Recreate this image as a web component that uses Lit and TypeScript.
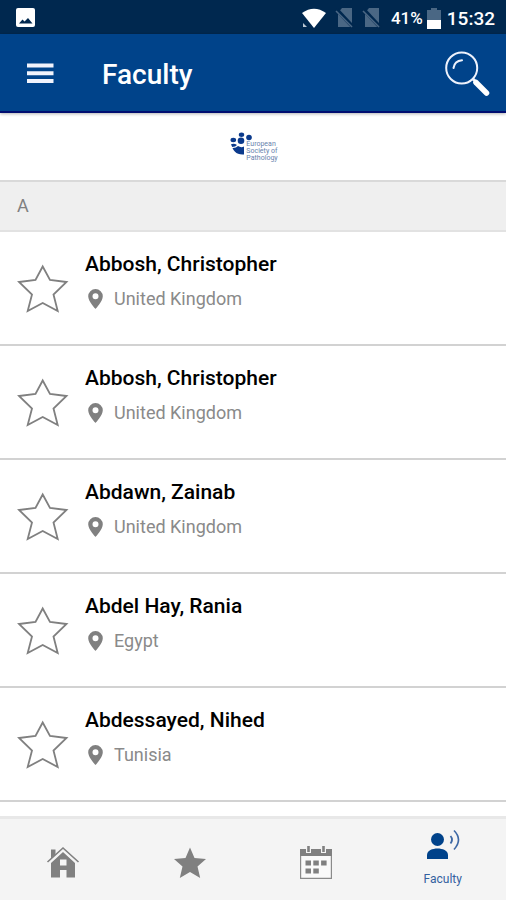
import { LitElement, html, css, svg } from "lit";
import { customElement, state } from "lit/decorators.js";
import { classMap } from "lit/directives/class-map.js";

interface Person {
  name: string;
  country: string;
}

const PEOPLE: Person[] = [
  { name: "Abbosh, Christopher", country: "United Kingdom" },
  { name: "Abbosh, Christopher", country: "United Kingdom" },
  { name: "Abdawn, Zainab", country: "United Kingdom" },
  { name: "Abdel Hay, Rania", country: "Egypt" },
  { name: "Abdessayed, Nihed", country: "Tunisia" },
];

const simIcon = html`<svg width="20" height="22" viewBox="0 0 20 22" aria-hidden="true">
  <path d="M7 1H17V20H3V6Z" fill="#4a6784" />
  <path d="M1 2L19 21" stroke="#00284f" stroke-width="4" />
  <path d="M1 4L17 20" stroke="#4a6784" stroke-width="1.6" />
</svg>`;

@customElement("status-bar")
class StatusBar extends LitElement {
  static styles = css`
    :host {
      display: flex;
      align-items: center;
      justify-content: space-between;
      height: 34px;
      flex: none;
      padding: 2px 11px 0 16px;
      box-sizing: border-box;
      background: #00284f;
      color: #fff;
      font-weight: 500;
    }
    .right {
      display: flex;
      align-items: center;
    }
    .sims {
      display: flex;
      gap: 7px;
      margin: 0 9px 0 8px;
    }
    .percent {
      font-size: 17px;
      margin-right: 4px;
    }
    .time {
      font-size: 19px;
      margin-left: 6px;
    }
    svg {
      display: block;
    }
  `;

  render() {
    return html`
      <svg width="20" height="20" viewBox="0 0 20 20" aria-hidden="true">
        <rect width="19" height="19" rx="2" fill="#fff" />
        <path d="M3 15.500L6.500 11.500L8.500 13.500L12 10L16.500 15.500Z" fill="#00284f" />
      </svg>
      <div class="right">
        <svg width="26" height="20" viewBox="0 0 26 20" aria-hidden="true">
          <path d="M1 5Q13-3.500 25 5L13 20Z" fill="#fff" />
          <path d="M2 15L6 19H2Z" fill="#b9c6d2" />
        </svg>
        <div class="sims">${simIcon}${simIcon}</div>
        <span class="percent">41%</span>
        <svg width="14" height="21" viewBox="0 0 14 21" aria-hidden="true">
          <path d="M4 0H10V2H14V13H0V2H4Z" fill="#4a6784" />
          <path d="M0 12H14V21H0Z" fill="#fff" />
        </svg>
        <span class="time">15:32</span>
      </div>
    `;
  }
}

@customElement("person-row")
class PersonRow extends LitElement {
  static properties = { person: { attribute: false }, starred: { state: true } };
  declare person: Person;
  declare starred: boolean;

  constructor() {
    super();
    this.starred = false;
  }

  static styles = css`
    :host {
      display: flex;
      align-items: center;
      gap: 16px;
      min-height: 112px;
      padding: 0 17px;
      border-bottom: 2px solid #d2d2d2;
    }
    button {
      border: 0;
      padding: 2px 0 0;
      background: none;
      cursor: pointer;
    }
    svg {
      display: block;
      flex: none;
    }
    .star {
      fill: none;
      stroke: #808080;
      stroke-width: 1.8;
    }
    .star.on {
      fill: #808080;
    }
    .text {
      padding-bottom: 16px;
    }
    h2 {
      margin: 0 0 9px;
      font-size: 21px;
      line-height: 28px;
      font-weight: 500;
      color: #000;
    }
    p {
      display: flex;
      align-items: center;
      gap: 11px;
      margin: 0;
      padding-left: 3px;
      font-size: 18px;
      line-height: 24px;
      color: #8a8a8a;
    }
  `;

  render() {
    return html`
      <button
        aria-label="Favourite ${this.person.name}"
        aria-pressed=${this.starred ? "true" : "false"}
        @click=${() => (this.starred = !this.starred)}
      >
        <svg width="52" height="50" viewBox="0 0 52 50">
          <path
            class=${classMap({ star: true, on: this.starred })}
            d="M25.700 2.500L33 16L49.500 18L36.500 30.500L40.700 47L25.700 39L10.700 47L15 30.500L2 18L18.500 16Z"
          />
        </svg>
      </button>
      <div class="text">
        <h2>${this.person.name}</h2>
        <p>
          <svg width="15" height="20" viewBox="0 0 15 20" aria-hidden="true">
            <path
              d="M7.500 0A7.300 7.300 0 0 0 .2 7.300C.2 12.500 7.500 20 7.500 20S14.800 12.500 14.800 7.300A7.300 7.300 0 0 0 7.500 0ZM7.500 4.300A3 3 0 1 1 7.500 10.300A3 3 0 1 1 7.500 4.300Z"
              fill="#808080"
            />
          </svg>
          ${this.person.country}
        </p>
      </div>
    `;
  }
}

const TABS = [
  {
    id: "home",
    label: "Home",
    icon: svg`<path d="M5 3.500H9.500V9L5 13Z" fill="#808080"/>
      <path d="M17 6L29 17V31.500H20.500V24H14V31.500H5V17ZM14 13.500V19.500H20.500V13.500Z" fill="#808080" fill-rule="evenodd"/>
      <path d="M1.500 17.500L17 3.500L32.500 17.500" fill="none" stroke="#f4f4f4" stroke-width="3"/>
      <path d="M1.500 16L17 2L32.500 16" fill="none" stroke="#808080" stroke-width="1.600"/>`,
  },
  {
    id: "favourites",
    label: "Favourites",
    icon: svg`<path d="M17 1.500L21.500 12L33 13L24.500 20.500L27.200 32L17 26L6.800 32L9.500 20.500L1 13L12.500 12Z" fill="#808080"/>`,
  },
  {
    id: "calendar",
    label: "Calendar",
    icon: svg`<path d="M1.600 3.500H32.400V32.400H1.600Z" fill="#fafafa" stroke="#8a8a8a" stroke-width="1.200"/>
      <path d="M1 3H33V10H1Z" fill="#808080"/>
      <path d="M7 0H12V7H7ZM22 0H27V7H22Z" fill="#f4f4f4"/>
      <path d="M8.200 0H10.800V6H8.200ZM23.200 0H25.800V6H23.200Z" fill="#808080"/>
      <path d="M6.500 14.500H12V19.500H6.500ZM14.300 14.500H19.800V19.500H14.300ZM22.100 14.500H27.600V19.500H22.100ZM6.500 22.500H12V27.500H6.500ZM14.300 22.500H19.800V27.500H14.300Z" fill="#808080"/>`,
  },
  {
    id: "faculty",
    label: "Faculty",
    icon: svg`<circle cx="11.500" cy="10.500" r="6.500" fill="#00428a"/>
      <path d="M1 30V26C1 21.500 6.500 19.500 11.500 19.500S22 21.500 22 26V30Z" fill="#00428a"/>
      <path d="M24.500 7Q27.500 10.500 24.500 14.500" fill="none" stroke="#3d68a5" stroke-width="1.800"/>
      <path d="M28 1.500Q37 10.500 28 20.500" fill="none" stroke="#3d68a5" stroke-width="1.600"/>`,
  },
];

@customElement("app-root")
class AppRoot extends LitElement {
  @state() private active = "faculty";

  static styles = css`
    :host {
      display: flex;
      flex-direction: column;
      height: 100vh;
      background: #fff;
      font-family: Roboto, "Liberation Sans", sans-serif;
    }
    button {
      border: 0;
      padding: 0;
      background: none;
      font: inherit;
      color: inherit;
      cursor: pointer;
    }
    svg {
      display: block;
    }
    header {
      display: flex;
      align-items: center;
      flex: none;
      height: 77px;
      padding: 0 15px 0 26px;
      background: #00438a;
      border-bottom: 2px solid #000d70;
      box-shadow: 0 1px 3px rgba(0, 0, 0, 0.3);
      color: #fff;
    }
    h1 {
      flex: 1;
      margin: 4px 0 0 48px;
      font-size: 28px;
      line-height: 36px;
      font-weight: 500;
    }
    .brand {
      display: flex;
      flex: none;
      align-items: center;
      justify-content: center;
      height: 67px;
      padding-left: 2px;
    }
    .brand p {
      margin: 9px 0 0 -6px;
      font-size: 7px;
      line-height: 7px;
      color: #6883ad;
    }
    .letter {
      flex: none;
      margin: 0;
      padding-left: 17px;
      font-size: 18px;
      line-height: 48px;
      font-weight: 400;
      color: #808080;
      background: #efefef;
      border-top: 2px solid #d9d9d9;
      border-bottom: 2px solid #e2e2e2;
    }
    main {
      flex: 1;
      min-height: 0;
      overflow: hidden;
    }
    nav {
      display: flex;
      flex: none;
      height: 81px;
      border-top: 3px solid #e8e8e8;
      background: #f4f4f4;
    }
    nav button {
      flex: 1;
      display: flex;
      flex-direction: column;
      align-items: center;
      justify-content: center;
      padding-top: 6px;
      gap: 8px;
      font-size: 12px;
      line-height: 16px;
      color: #33609f;
    }
    nav button.active {
      padding: 0 0 4px;
    }
  `;

  render() {
    return html`
      <status-bar></status-bar>
      <header>
        <button aria-label="Menu">
          <svg width="28" height="22" viewBox="0 0 28 22">
            <path d="M1 1.500H27.500V5.500H1ZM1 9.200H27.500V13.200H1ZM1 16.900H27.500V20.900H1Z" fill="#f1f3fc" />
          </svg>
        </button>
        <h1>Faculty</h1>
        <button aria-label="Search">
          <svg width="46" height="46" viewBox="0 0 46 46">
            <circle cx="16.700" cy="18" r="15.500" fill="none" stroke="#eef2fc" stroke-width="2" />
            <path d="M8.500 18Q9.500 11 17 10.300" fill="none" stroke="#eef2fc" stroke-width="2" stroke-linecap="round" />
            <path d="M27.500 28.500L31 32" stroke="#eef2fc" stroke-width="3" />
            <path d="M31 32.500L41.500 43" stroke="#fff" stroke-width="5.500" stroke-linecap="round" />
          </svg>
        </button>
      </header>
      <div class="brand">
        <svg width="22" height="30" viewBox="0 0 22 30" aria-hidden="true">
          <g fill="#0b3a8c">
            <ellipse cx="3.300" cy="8" rx="2.800" ry="2.200" />
            <ellipse cx="11.500" cy="2.700" rx="2.700" ry="2.200" />
            <circle cx="19" cy="5.500" r="2.800" />
            <circle cx="11" cy="8.700" r="3.300" />
            <path d="M1 12.200Q4 10.800 7 13Q5.500 15 2.200 15Z" />
            <path d="M2.500 16Q6 16.200 8 14Q11 16 14 14.500V22.500Q8 23 5 19.800Q3.300 18 2.500 16Z" />
          </g>
        </svg>
        <p>European<br />Society of<br />Pathology</p>
      </div>
      <h2 class="letter">A</h2>
      <main>${PEOPLE.map((p) => html`<person-row .person=${p}></person-row>`)}</main>
      <nav>
        ${TABS.map(
          (t) => html`<button
            class=${classMap({ active: t.id === this.active })}
            aria-label=${t.label}
            @click=${() => (this.active = t.id)}
          >
            <svg width="34" height="34" viewBox="0 0 34 34">${t.icon}</svg>
            ${t.id === this.active ? html`<span>${t.label}</span>` : null}
          </button>`
        )}
      </nav>
    `;
  }
}
